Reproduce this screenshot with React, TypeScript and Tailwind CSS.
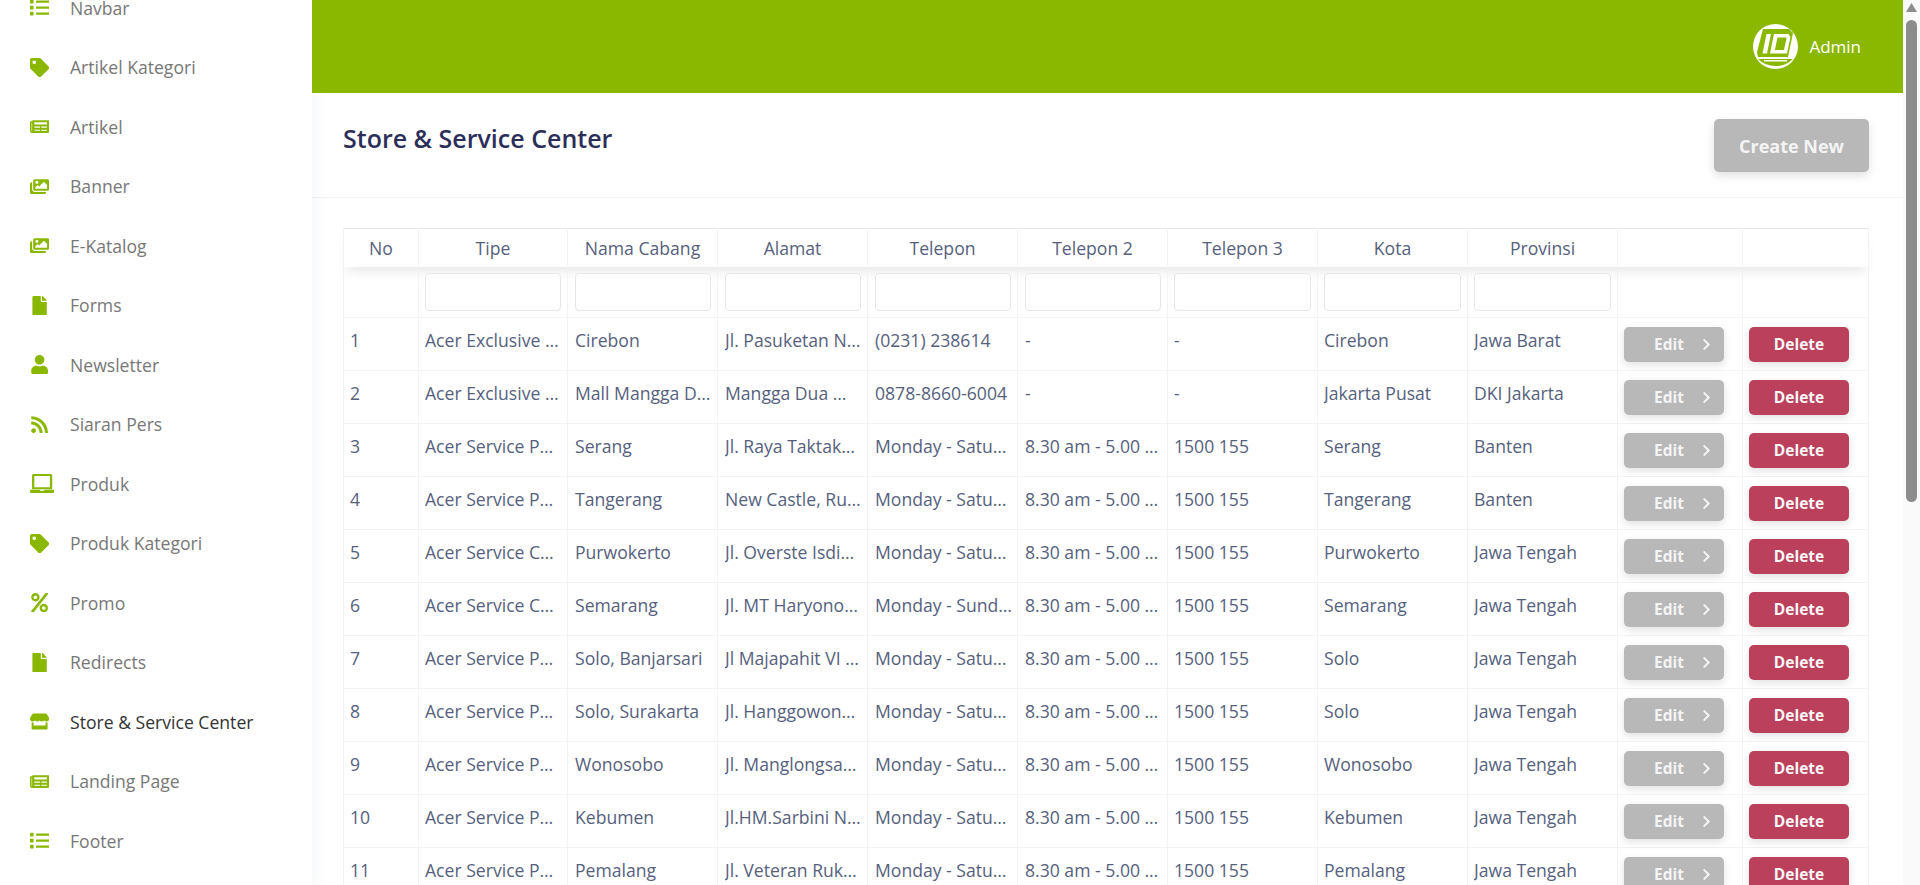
import { FaChevronRight, FaFile, FaImages, FaList, FaNewspaper, FaPercent, FaRss, FaStore, FaTag, FaUser } from 'react-icons/fa';
import type { SVGProps } from 'react';

function LaptopIcon(props: SVGProps<SVGSVGElement>) {
  return (
    <svg viewBox="0 0 24 19" fill="currentColor" {...props}>
      <path fillRule="evenodd" d="M3.500 0h17A1.500 1.500 0 0 1 22 1.500V15H2V1.500A1.500 1.500 0 0 1 3.500 0zM4.300 2v11h15.400V2z" />
      <path d="M0 15.500h9.500l.8 1h3.400l.8-1H24v1.700a1.800 1.800 0 0 1-1.800 1.800H1.800A1.800 1.800 0 0 1 0 17.200z" />
    </svg>
  );
}

const menu = [
  { label: 'Navbar', icon: FaList },
  { label: 'Artikel Kategori', icon: FaTag },
  { label: 'Artikel', icon: FaNewspaper },
  { label: 'Banner', icon: FaImages },
  { label: 'E-Katalog', icon: FaImages },
  { label: 'Forms', icon: FaFile },
  { label: 'Newsletter', icon: FaUser },
  { label: 'Siaran Pers', icon: FaRss },
  { label: 'Produk', icon: LaptopIcon },
  { label: 'Produk Kategori', icon: FaTag },
  { label: 'Promo', icon: FaPercent },
  { label: 'Redirects', icon: FaFile },
  { label: 'Store & Service Center', icon: FaStore, active: true },
  { label: 'Landing Page', icon: FaNewspaper },
  { label: 'Footer', icon: FaList },
];

const columns = ['No', 'Tipe', 'Nama Cabang', 'Alamat', 'Telepon', 'Telepon 2', 'Telepon 3', 'Kota', 'Provinsi', '', ''];

// left/right padding per column, the reference is not quite even
const cellPad = [
  'pl-[6px] pr-[6px]',
  'pl-[6px] pr-[6px]',
  'pl-[7px] pr-[6px]',
  'pl-[7px] pr-[6px]',
  'pl-[7px] pr-[4px]',
  'pl-[7px] pr-[6px]',
  'pl-[6px] pr-[6px]',
  'pl-[6px] pr-[6px]',
  'pl-[6px] pr-[6px]',
];

const hours = 'Monday - Saturday';
const time = '8.30 am - 5.00 pm';
const rows = [
  ['1', 'Acer Exclusive Store', 'Cirebon', 'Jl. Pasuketan No. 10', '(0231) 238614', '-', '-', 'Cirebon', 'Jawa Barat'],
  ['2', 'Acer Exclusive Store', 'Mall Mangga Dua', 'Mangga Dua Mall Lt. 3', '0878-8660-6004', '-', '-', 'Jakarta Pusat', 'DKI Jakarta'],
  ['3', 'Acer Service Point', 'Serang', 'Jl. Raya Taktakan No. 8', hours, time, '1500 155', 'Serang', 'Banten'],
  ['4', 'Acer Service Point', 'Tangerang', 'New Castle, Ruko Blok A', hours, time, '1500 155', 'Tangerang', 'Banten'],
  ['5', 'Acer Service Center', 'Purwokerto', 'Jl. Overste Isdiman No. 3', hours, time, '1500 155', 'Purwokerto', 'Jawa Tengah'],
  ['6', 'Acer Service Center', 'Semarang', 'Jl. MT Haryono No. 500', 'Monday - Sunday', time, '1500 155', 'Semarang', 'Jawa Tengah'],
  ['7', 'Acer Service Point', 'Solo, Banjarsari', 'Jl Majapahit VI No. 12', hours, time, '1500 155', 'Solo', 'Jawa Tengah'],
  ['8', 'Acer Service Point', 'Solo, Surakarta', 'Jl. Hanggowongso No. 7', hours, time, '1500 155', 'Solo', 'Jawa Tengah'],
  ['9', 'Acer Service Point', 'Wonosobo', 'Jl. Manglongsari No. 21', hours, time, '1500 155', 'Wonosobo', 'Jawa Tengah'],
  ['10', 'Acer Service Point', 'Kebumen', 'Jl.HM.Sarbini No. 45 Kebumen', hours, time, '1500 155', 'Kebumen', 'Jawa Tengah'],
  ['11', 'Acer Service Point', 'Pemalang', 'Jl. Veteran Ruko No. 2', hours, time, '1500 155', 'Pemalang', 'Jawa Tengah'],
];

function IdLogo() {
  return (
    <svg viewBox="0 0 45 45" className="h-[45px] w-[45px] shrink-0">
      <circle cx="22.5" cy="22.5" r="22.5" fill="#fff" />
      <path d="M10 5h26l4 4-5 24H5l-1-5z" fill="#8ab800" />
      <path d="M5 35h35q-7 7-17.500 7T5 35z" fill="#8ab800" />
      <path d="M11 37.500h23V36H11z" fill="#fff" />
      <path d="M13.500 10H18l-4 19.500H9.500z" fill="#fff" />
      <path d="M21 10h14.500l2 3-3.500 16.500H17zm3.500 3.500l-2.600 12.500h9l2.700-11.500-.7-1z" fill="#fff" fillRule="evenodd" />
    </svg>
  );
}

export default function App() {
  return (
    <div className="flex h-[885px] overflow-hidden bg-white font-['Open_Sans',sans-serif] text-[17.6px]">
      <aside className="relative z-10 w-[312px] shrink-0 overflow-hidden bg-white shadow-[4px_0_14px_rgba(60,70,110,0.05)]">
        <ul className="-mt-[22px]">
          {menu.map((item) => (
            <li key={item.label} className="flex h-[59.5px] items-center pl-[30px]">
              <span className="flex w-[40px] shrink-0 items-center">
                <item.icon className="h-[19.2px] w-auto text-[#8ab800]" />
              </span>
              <span className={item.active ? 'text-[#333]' : 'text-[#777]'}>{item.label}</span>
            </li>
          ))}
        </ul>
      </aside>

      <main className="min-w-0 flex-1">
        <header className="relative z-20 flex h-[93px] items-center justify-end gap-[11px] bg-[#8ab800] pr-[42px] pl-[30px] text-[17px] text-white">
          <IdLogo />
          <span>Admin</span>
        </header>

        <div className="relative flex h-[105px] justify-between border-b border-[#f2f3f5] pt-[26px] pr-[34px] pl-[31px]">
          <h1 className="mt-[1px] text-[25px] leading-[36px] font-semibold text-[#2c2e5a]">Store &amp; Service Center</h1>
          <button className="h-[53px] w-[155px] rounded-[5px] bg-[#b8b8b8] pt-[1px] text-[18px] font-bold text-[#f4f4f4] shadow-[0_4px_10px_rgba(0,0,0,0.12)]">
            Create New
          </button>
        </div>

        <div className="pt-[30px] pr-[35px] pl-[31px]">
          <table className="w-[1525px] table-fixed border-collapse border border-[#e6e6e6] text-[#565f7e]">
            <colgroup>
              <col className="w-[75px]" />
              <col className="w-[149px]" />
              {columns.slice(2, 9).map((c) => (
                <col key={c} className="w-[150px]" />
              ))}
              <col className="w-[125px]" />
              <col className="w-[126px]" />
            </colgroup>
            <thead>
              <tr className="h-[38px] shadow-[0_8px_12px_-4px_rgba(0,0,0,0.1)]">
                {columns.map((c, i) => (
                  <th key={i} className="border-x border-[#f2f3f5] px-[6px] text-center font-normal">
                    {c}
                  </th>
                ))}
              </tr>
              <tr className="h-[51px]">
                {columns.map((c, i) => (
                  <td key={i} className={`border-x border-[#f2f3f5] pt-[1px] ${i === 4 ? 'pl-[7px] pr-[6px]' : cellPad[i] ?? 'px-[6px]'}`}>
                    {i > 0 && i < 9 && (
                      <input className="block h-[38px] w-full rounded-[4px] border border-[#e6e6e6] bg-white" />
                    )}
                  </td>
                ))}
              </tr>
            </thead>
            <tbody>
              {rows.map((row) => (
                <tr key={row[0]} className="h-[53px] border-t border-[#f2f3f5]">
                  {row.map((cell, i) => (
                    <td key={i} className={`border-x border-[#f2f3f5] pt-[10px] pb-[18px] align-top leading-[24px] ${cellPad[i]}`}>
                      <div className="truncate">{cell}</div>
                    </td>
                  ))}
                  <td className="border-x border-[#f2f3f5] px-[6px]">
                    <button className="relative h-[35px] w-[100px] rounded-[5px] bg-[#b8b8b8] pt-[1px] pr-[18px] pl-[8px] text-[15.5px] font-bold text-[#f4f4f4] shadow-[0_3px_8px_rgba(0,0,0,0.12)]">
                      Edit
                      <FaChevronRight className="absolute top-[11px] right-[11px] h-[13px] w-[13px]" />
                    </button>
                  </td>
                  <td className="border-x border-[#f2f3f5] px-[6px]">
                    <button className="h-[35px] w-[100px] rounded-[5px] bg-[#bb405c] pt-[1px] text-[15.5px] font-bold text-[#f8f8f8] shadow-[0_3px_8px_rgba(0,0,0,0.12)]">
                      Delete
                    </button>
                  </td>
                </tr>
              ))}
            </tbody>
          </table>
        </div>
      </main>

      <div className="flex w-[17px] shrink-0 flex-col items-center bg-[#fafafa]">
        <svg viewBox="0 0 11 9" className="mt-[3px] h-[9px] w-[11px] fill-[#8c8c8c]">
          <path d="M5.500 0L11 9H0z" />
        </svg>
        <div className="mt-[8px] h-[482px] w-[11px] rounded-full bg-[#8c8c8c]" />
      </div>
    </div>
  );
}
